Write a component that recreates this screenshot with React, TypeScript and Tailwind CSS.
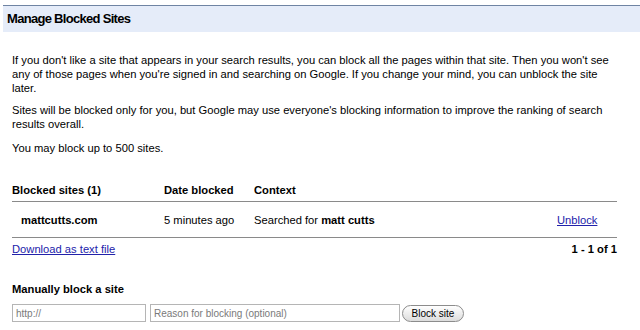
import React from 'react';

const columns = [
  { label: 'Blocked sites (1)', className: 'w-[152px]' },
  { label: 'Date blocked', className: 'w-[90px]' },
  { label: 'Context', className: 'flex-1' },
];

const blocked = [
  { site: 'mattcutts.com', date: '5 minutes ago', query: 'matt cutts' },
];

export default function App() {
  return (
    <div className="w-[640px] h-[330px] overflow-hidden bg-white text-black text-[11.2px] leading-[14px] font-['Liberation_Sans',Arial,sans-serif]">
      <div className="pt-[5px] pl-[3px]">
        <div className="h-[27px] border-t border-[#6f84a3] bg-[#e5ecf9] flex items-center pl-[4px] text-[13px] tracking-[-0.7px] font-bold">
          Manage Blocked Sites
        </div>
      </div>

      <div className="px-[12px]">
        <p className="mt-[21px] whitespace-nowrap">
          If you don't like a site that appears in your search results, you can block all the pages within that site. Then you won't see
          <br />
          any of those pages when you're signed in and searching on Google. If you change your mind, you can unblock the site
          <br />
          later.
        </p>
        <p className="mt-[8px] whitespace-nowrap">
          Sites will be blocked only for you, but Google may use everyone's blocking information to improve the ranking of search
          <br />
          results overall.
        </p>
        <p className="mt-[10px]">You may block up to 500 sites.</p>

        <div className="w-[605px] mt-[23px]">
          <div className="flex h-[24px] items-center border-b border-[#8a8a8a] font-bold">
            {columns.map((c) => (
              <div key={c.label} className={c.className}>
                {c.label}
              </div>
            ))}
          </div>
          {blocked.map((row) => (
            <div key={row.site} className="flex h-[36px] items-center border-b border-[#8a8a8a]">
              <div className="w-[152px] pl-[9px] font-bold">{row.site}</div>
              <div className="w-[90px]">{row.date}</div>
              <div className="flex-1">
                Searched for <span className="font-bold">{row.query}</span>
              </div>
              <a href="#" className="w-[60px] text-[#2222aa] underline">
                Unblock
              </a>
            </div>
          ))}
          <div className="flex h-[22px] items-center justify-between">
            <a href="#" className="text-[#2222aa] underline">
              Download as text file
            </a>
            <span className="font-bold">1 - 1 of 1</span>
          </div>
        </div>

        <div className="mt-[22px] font-bold">Manually block a site</div>
        <div className="flex items-center gap-[4px] mt-[8px]">
          <input
            type="text"
            placeholder="http://"
            className="w-[134px] h-[18px] border border-[#b5b5b5] px-[3px] text-[10px] placeholder:text-[#7a7a7a] outline-none"
          />
          <input
            type="text"
            placeholder="Reason for blocking (optional)"
            className="w-[250px] h-[18px] border border-[#b5b5b5] px-[3px] text-[10px] placeholder:text-[#7a7a7a] outline-none"
          />
          <button className="ml-[-2px] h-[17px] w-[62px] rounded-full border border-[#8c8c8c] bg-gradient-to-b from-white to-[#dcdcdc] text-[10px] leading-[15px]">
            Block site
          </button>
        </div>
      </div>
    </div>
  );
}
